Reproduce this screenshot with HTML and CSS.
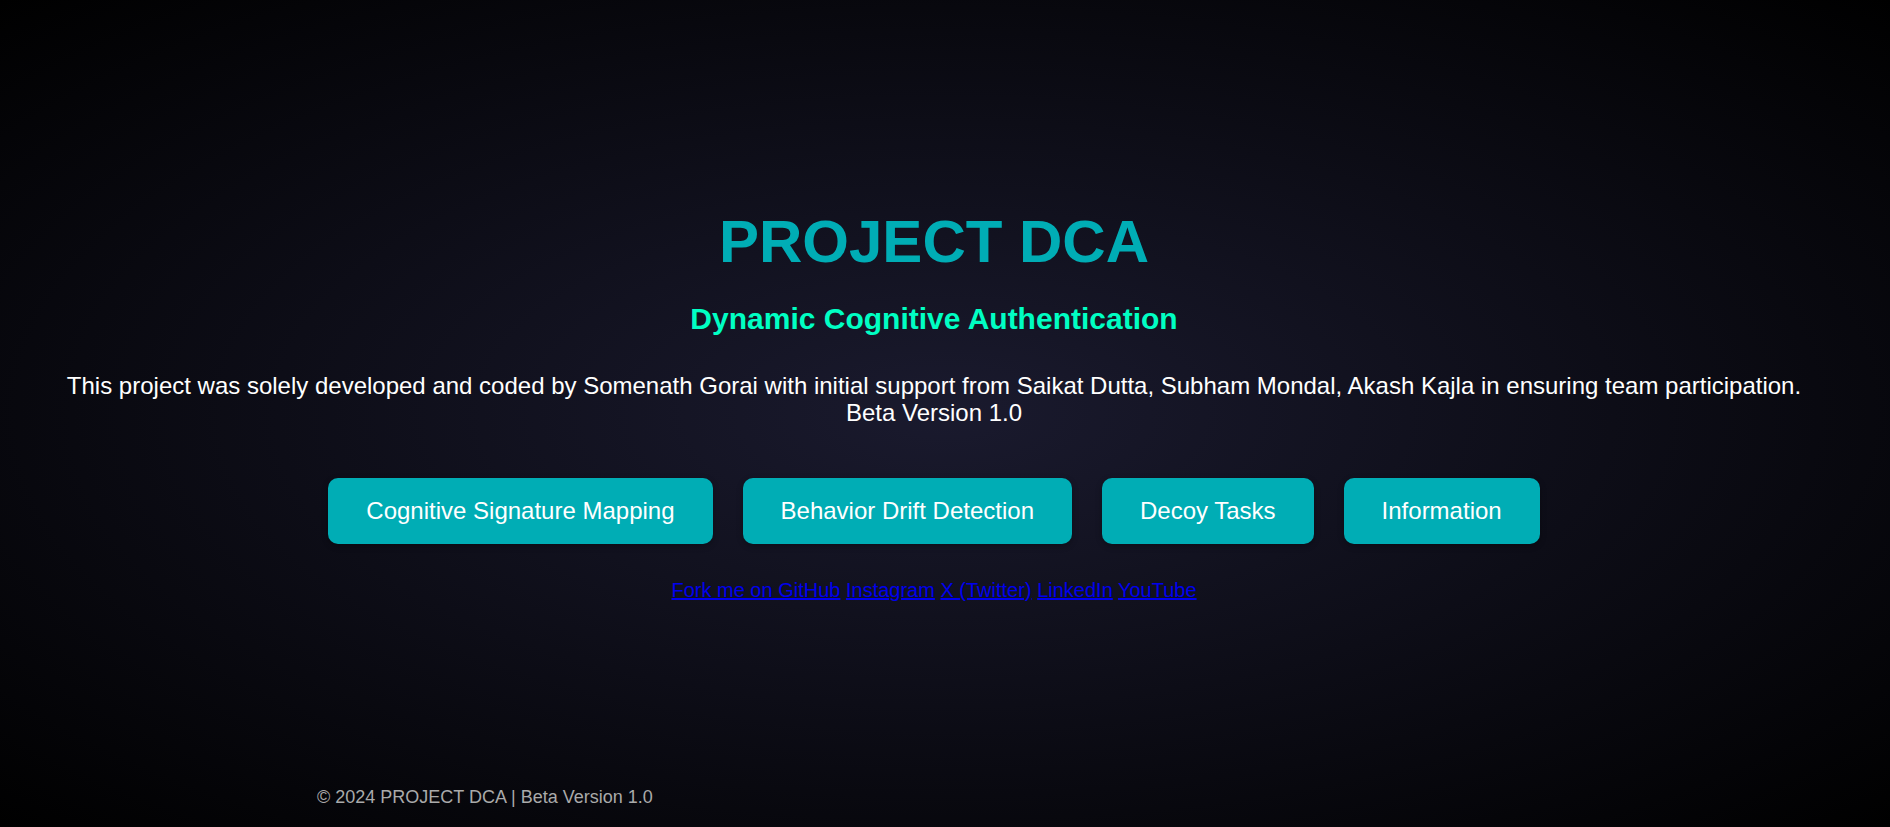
FILE: index.html
```html
<!DOCTYPE html>
<html lang="en">
<head>
<meta charset="utf-8">
<title>PROJECT DCA</title>
<link rel="stylesheet" href="styles.css">
</head>
<body>
<div class="page">
  <main class="hero">
    <h1 class="title">PROJECT DCA</h1>
    <h2 class="subtitle">Dynamic Cognitive Authentication</h2>
    <p class="intro">This project was solely developed and coded by Somenath Gorai with initial support from Saikat Dutta, Subham Mondal, Akash Kajla in ensuring team participation.<br>Beta Version 1.0</p>
    <div class="actions">
      <button class="btn">Cognitive Signature Mapping</button>
      <button class="btn">Behavior Drift Detection</button>
      <button class="btn">Decoy Tasks</button>
      <button class="btn">Information</button>
    </div>
    <div class="links">
      <a href="#">Fork me on GitHub</a>
      <a href="#">Instagram</a>
      <a href="#">X (Twitter)</a>
      <a href="#">LinkedIn</a>
      <a href="#">YouTube</a>
    </div>
  </main>
  <footer class="footer">© 2024 PROJECT DCA | Beta Version 1.0</footer>
</div>
</body>
</html>
```
FILE: styles.css
```css
html, body {
  margin: 0;
  padding: 0;
  height: 100%;
}
body {
  font-family: "Liberation Sans", Arial, sans-serif;
  background: radial-gradient(ellipse at center, #1a1a2e, #000);
  color: #fff;
  overflow: hidden;
}
.page {
  height: 827px;
  display: flex;
  flex-direction: column;
}
.hero {
  flex: 1;
  display: flex;
  flex-direction: column;
  align-items: center;
  text-align: center;
  padding: 207px 22px 0 0;
}
.title {
  margin: 0;
  font-size: 60px;
  font-weight: bold;
  color: #00adb5;
  line-height: normal;
}
.subtitle {
  margin: 26px 0 0;
  font-size: 30px;
  font-weight: bold;
  color: #00ffc3;
  line-height: normal;
}
.intro {
  margin: 36px 0 0;
  font-size: 24px;
  line-height: 27px;
}
.actions {
  display: flex;
  gap: 30px;
  margin-top: 52px;
}
.btn {
  font-family: "Liberation Sans", Arial, sans-serif;
  font-size: 24px;
  color: #fff;
  background: #00adb5;
  border: none;
  border-radius: 10px;
  padding: 19px 38px;
  line-height: normal;
  box-shadow: 0 2px 6px rgba(0, 0, 0, 0.3);
  cursor: pointer;
}
.links {
  margin-top: 35px;
  font-size: 20px;
}
.links a {
  color: #0000ee;
}
.footer {
  padding: 0 0 19px 317px;
  font-size: 18px;
  color: #aaa;
}
```
